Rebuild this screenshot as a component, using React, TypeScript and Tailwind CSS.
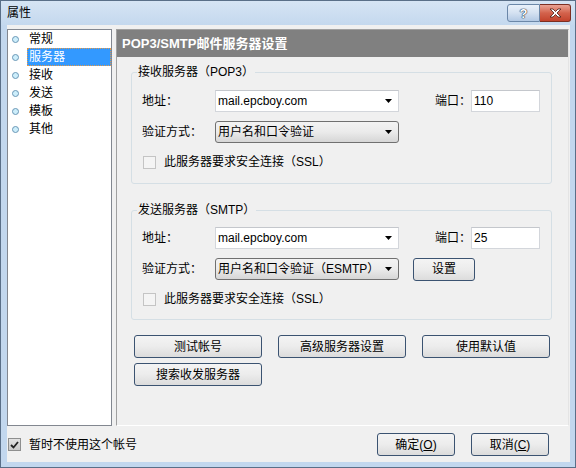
import React from "react"

const font = "font-['Liberation_Sans','Noto_Sans_CJK_SC',sans-serif]"

const navItems = ["常规", "服务器", "接收", "发送", "模板", "其他"]

function Arrow() {
    return (
        <svg width="7" height="4" viewBox="0 0 7 4" className="shrink-0">
            <path d="M0 0h7L3.5 4z" fill="#000" />
        </svg>
    )
}

function ComboInput({ value }: { value: string }) {
    return (
        <div className="flex h-[22px] w-[184px] items-center border border-[#d3d6db] border-t-[#c4c7cc] bg-white pl-[2px] pr-[6px]">
            <span>{value}</span>
            <span className="ml-auto"><Arrow /></span>
        </div>
    )
}

function DropList({ value }: { value: string }) {
    return (
        <div className="flex h-[22px] w-[184px] items-center rounded-[3px] border border-[#707070] bg-linear-to-b from-[#f3f3f3] via-[#ebebeb] to-[#d6d6d6] pl-[2px] pr-[6px]">
            <span>{value}</span>
            <span className="ml-auto"><Arrow /></span>
        </div>
    )
}

function TextInput({ value }: { value: string }) {
    return (
        <div className="flex h-[22px] w-[69px] items-center border border-[#d3d6db] border-t-[#c4c7cc] bg-white pl-[2px]">
            {value}
        </div>
    )
}

function WinButton({ children, className = "" }: { children: React.ReactNode; className?: string }) {
    return (
        <button
            type="button"
            className={`flex h-[23px] items-center justify-center rounded-[3px] border border-[#3b5371] bg-linear-to-b from-[#f4f4f4] via-[#ececec] to-[#dcdcdc] text-[12px] text-black ${className}`}
        >
            {children}
        </button>
    )
}

function DisabledCheck() {
    return <span className="h-[13px] w-[13px] shrink-0 border border-[#c4c4c4] bg-[#f4f4f4]" />
}

function ServerGroup({ title, port, auth, setup, tall }: { title: string; port: string; auth: string; setup?: boolean; tall?: boolean }) {
    return (
        <div className={`relative rounded-[3px] border border-[#d5dfe5] pl-[10px] ${tall ? "h-[112px] pt-[17px]" : "h-[110px] pt-[16px]"}`}>
            <span className="absolute left-[5px] top-[-9px] bg-[#f0f0f0] px-[1px] leading-[16px]">{title}</span>
            <div className="flex h-[22px] items-center">
                <span className="w-[73px]">地址：</span>
                <ComboInput value="mail.epcboy.com" />
                <span className="ml-[36px] w-[36px]">端口：</span>
                <TextInput value={port} />
            </div>
            <div className="mt-[9px] flex h-[22px] items-center">
                <span className="w-[73px]">验证方式：</span>
                <DropList value={auth} />
                {setup && <WinButton className="ml-[14px] h-[22px] w-[62px]">设置</WinButton>}
            </div>
            <div className="mt-[8px] flex h-[22px] items-center pl-[1px]">
                <DisabledCheck />
                <span className="ml-[8px]">此服务器要求安全连接（SSL）</span>
            </div>
        </div>
    )
}

export default function App() {
    return (
        <div className={`flex h-[468px] w-[576px] flex-col border border-[#5a6f88] bg-[#c2d7ee] text-[12px] text-black ${font}`}>
            {/* Title bar */}
            <div className="flex h-[24px] items-start bg-linear-to-b from-[#d6e4f4] to-[#c4d8ee] pl-[6px] pr-[4px]">
                <span className="pt-[5px] leading-[15px]">属性</span>
                <div className="ml-auto mt-[3px] flex">
                    <div className="flex h-[18px] w-[33px] items-center justify-center rounded-l-[3px] border border-[#6b87a8] bg-linear-to-b from-[#eaf1fa] via-[#d4e1f1] to-[#b3c9e4] text-[13px] font-bold leading-none text-white [text-shadow:0_0_1px_#1d2f45,0_0_1px_#1d2f45,0_0_1px_#1d2f45]">
                        ?
                    </div>
                    <div className="flex h-[18px] w-[31px] items-center justify-center rounded-r-[3px] border border-l-0 border-[#7d2f22] bg-linear-to-b from-[#e9a394] via-[#d3624c] to-[#c3432c]">
                        <svg width="13" height="10" viewBox="0 0 13 10">
                            <path d="M1 1h3l2.5 2.5L9 1h3L8 5l4 4H9L6.5 6.5 4 9H1l4-4z" fill="#fff" stroke="#4a1d14" strokeWidth="0.8" strokeLinejoin="round" />
                        </svg>
                    </div>
                </div>
            </div>

            {/* Client area */}
            <div className="mb-[5px] ml-[6px] flex h-[437px] w-[563px] flex-col bg-[#f0f0f0] pt-[4px]">
                <div className="flex h-[397px] gap-[4px]">
                    {/* Left nav list */}
                    <div className="w-[105px] border border-[#828790] bg-white">
                        {navItems.map((item, i) => (
                            <div key={item} className="flex h-[18px] items-center">
                                <span className="flex w-[19px] shrink-0 pl-[4px]">
                                    <span className="h-[7px] w-[7px] rounded-full border border-[#6a97b6] bg-[#cdeefb]" />
                                </span>
                                {i === 1 ? (
                                    <span className="flex h-[18px] flex-1 items-center border border-dotted border-[#e59a48] bg-[#3399ff] pl-[1px] text-white">
                                        {item}
                                    </span>
                                ) : (
                                    <span className="pl-[2px]">{item}</span>
                                )}
                            </div>
                        ))}
                    </div>

                    {/* Right panel */}
                    <div className="w-[453px] border border-[#a0a0a0] border-b-white border-r-[#e4e4e4]">
                        <div className="flex h-[27px] items-center bg-[#808080] pl-[5px] text-[13px] font-bold text-white">
                            POP3/SMTP邮件服务器设置
                        </div>
                        <div className="pl-[14px] pr-[16px] pt-[15px]">
                            <ServerGroup title="接收服务器（POP3）" port="110" auth="用户名和口令验证" tall />
                            <div className="mt-[26px]">
                                <ServerGroup title="发送服务器（SMTP）" port="25" auth="用户名和口令验证（ESMTP）" setup />
                            </div>
                            <div className="mt-[15px] flex gap-[16px] pl-[3px]">
                                <WinButton className="w-[128px]">测试帐号</WinButton>
                                <WinButton className="w-[128px]">高级服务器设置</WinButton>
                                <WinButton className="w-[128px]">使用默认值</WinButton>
                            </div>
                            <div className="mt-[5px] pl-[3px]">
                                <WinButton className="w-[128px]">搜索收发服务器</WinButton>
                            </div>
                        </div>
                    </div>
                </div>

                {/* Footer */}
                <div className="mt-[7px] flex h-[23px] items-center pl-[1px] pr-[21px]">
                    <span className="flex h-[13px] w-[13px] items-center justify-center border border-[#8e8f8f] bg-linear-to-b from-[#e2e2e2] to-[#c9c9c9]">
                        <svg width="9" height="8" viewBox="0 0 9 8">
                            <path d="M1 4l2.5 2.5L8 1" fill="none" stroke="#222" strokeWidth="1.8" />
                        </svg>
                    </span>
                    <span className="ml-[8px]">暂时不使用这个帐号</span>
                    <WinButton className="ml-auto w-[78px]">
                        确定(<span className="underline">O</span>)
                    </WinButton>
                    <WinButton className="ml-[16px] w-[78px]">
                        取消(<span className="underline">C</span>)
                    </WinButton>
                </div>
            </div>
        </div>
    )
}
